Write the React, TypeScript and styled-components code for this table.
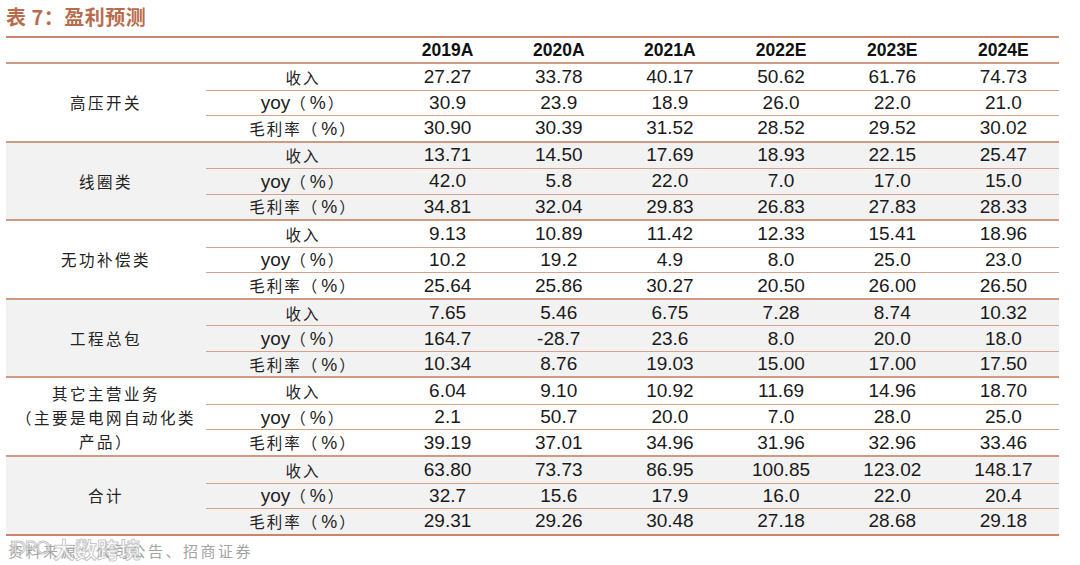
import React from "react";
import styled, { createGlobalStyle } from "styled-components";

const Global = createGlobalStyle`
  html, body { margin: 0; padding: 0; background: #ffffff; }
  body { font-family: "Liberation Sans", Arial, "Noto Sans CJK SC", sans-serif; }
`;

const Page = styled.div`
  width: 1080px;
  height: 565px;
  position: relative;
  overflow: hidden;
  background: #fff;
`;

const Title = styled.div`
  margin: 0 0 0 6px;
  height: 36px;
  display: flex;
  align-items: center;
  font-family: "Noto Sans CJK SC", sans-serif;
  font-weight: 700;
  font-size: 20px;
  color: #b96c4c;
  letter-spacing: 0.5px;
  box-sizing: border-box;
  padding-bottom: 4px;
`;

const Table = styled.div`
  margin-left: 6px;
  width: 1053px;
  border-top: 2px solid #c9866a;
  border-bottom: 2px solid #c9866a;
`;

const HeaderRow = styled.div`
  display: grid;
  grid-template-columns: 386px repeat(6, 1fr);
  height: 24px;
  align-items: center;
`;

const HeadCell = styled.div`
  text-align: center;
  font-family: "Liberation Sans", Arial, sans-serif;
  font-weight: 700;
  font-size: 17.5px;
  color: #111;
`;

const Group = styled.div<{ $shaded: boolean }>`
  display: grid;
  grid-template-columns: 200px 1fr;
  height: 78.6px;
  box-sizing: border-box;
  border-top: 2px solid #d09a82;
  background: ${(p) => (p.$shaded ? "#f2f2f2" : "#ffffff")};
`;

const GroupLabel = styled.div`
  display: flex;
  align-items: center;
  justify-content: center;
  text-align: center;
  font-family: "Noto Sans CJK SC", sans-serif;
  font-size: 15.5px;
  line-height: 24px;
  letter-spacing: 2.5px;
  color: #222;
`;

const Rows = styled.div`
  display: grid;
  grid-template-rows: repeat(3, 1fr);
`;

const Row = styled.div<{ $first: boolean }>`
  display: grid;
  grid-template-columns: 186px repeat(6, 1fr);
  align-items: center;
  box-sizing: border-box;
  border-top: ${(p) => (p.$first ? "none" : "1.5px solid #d6a28b")};
`;

const SubLabel = styled.div`
  text-align: center;
  font-family: "Noto Sans CJK SC", sans-serif;
  font-size: 15.5px;
  letter-spacing: 2px;
  color: #222;
  white-space: nowrap;
  padding-left: 8px;
`;

const Yoy = styled.span`
  font-family: "Liberation Sans", Arial, sans-serif;
  font-size: 19px;
  letter-spacing: 0;
`;

const Pct = styled.span`
  font-family: "Liberation Sans", Arial, sans-serif;
  font-size: 18px;
  letter-spacing: 0;
  margin: 0 2px;
`;

const Num = styled.div`
  text-align: center;
  font-family: "Liberation Sans", Arial, sans-serif;
  font-size: 19px;
  color: #1a1a1a;
`;

const Source = styled.div`
  margin: 4px 0 0 8px;
  font-family: "Noto Sans CJK SC", sans-serif;
  font-size: 15px;
  letter-spacing: 2.5px;
  color: #a3a3a3;
`;

const Watermark = styled.div`
  position: absolute;
  left: 10px;
  top: 532px;
  display: flex;
  align-items: center;
  gap: 4px;
  font-family: "Noto Sans CJK SC", sans-serif;
  font-weight: 700;
  font-size: 22px;
  color: rgba(255, 255, 255, 0.75);
  -webkit-text-stroke: 1px rgba(150, 150, 150, 0.55);
  pointer-events: none;
`;

const Mark = styled.span`
  font-family: "Liberation Sans", Arial, sans-serif;
  font-size: 18px;
  font-weight: 400;
  letter-spacing: -1px;
`;

const years = ["2019A", "2020A", "2021A", "2022E", "2023E", "2024E"];

type GroupData = { label: React.ReactNode; rows: string[][] };

const groups: GroupData[] = [
  {
    label: "高压开关",
    rows: [
      ["27.27", "33.78", "40.17", "50.62", "61.76", "74.73"],
      ["30.9", "23.9", "18.9", "26.0", "22.0", "21.0"],
      ["30.90", "30.39", "31.52", "28.52", "29.52", "30.02"],
    ],
  },
  {
    label: "线圈类",
    rows: [
      ["13.71", "14.50", "17.69", "18.93", "22.15", "25.47"],
      ["42.0", "5.8", "22.0", "7.0", "17.0", "15.0"],
      ["34.81", "32.04", "29.83", "26.83", "27.83", "28.33"],
    ],
  },
  {
    label: "无功补偿类",
    rows: [
      ["9.13", "10.89", "11.42", "12.33", "15.41", "18.96"],
      ["10.2", "19.2", "4.9", "8.0", "25.0", "23.0"],
      ["25.64", "25.86", "30.27", "20.50", "26.00", "26.50"],
    ],
  },
  {
    label: "工程总包",
    rows: [
      ["7.65", "5.46", "6.75", "7.28", "8.74", "10.32"],
      ["164.7", "-28.7", "23.6", "8.0", "20.0", "18.0"],
      ["10.34", "8.76", "19.03", "15.00", "17.00", "17.50"],
    ],
  },
  {
    label: (
      <>
        其它主营业务
        <br />
        （主要是电网自动化类
        <br />
        产品）
      </>
    ),
    rows: [
      ["6.04", "9.10", "10.92", "11.69", "14.96", "18.70"],
      ["2.1", "50.7", "20.0", "7.0", "28.0", "25.0"],
      ["39.19", "37.01", "34.96", "31.96", "32.96", "33.46"],
    ],
  },
  {
    label: "合计",
    rows: [
      ["63.80", "73.73", "86.95", "100.85", "123.02", "148.17"],
      ["32.7", "15.6", "17.9", "16.0", "22.0", "20.4"],
      ["29.31", "29.26", "30.48", "27.18", "28.68", "29.18"],
    ],
  },
];

const subLabels = [
  <>收入</>,
  <>
    <Yoy>yoy</Yoy>（<Pct>%</Pct>）
  </>,
  <>
    毛利率（<Pct>%</Pct>）
  </>,
];

export default function App() {
  return (
    <Page>
      <Global />
      <Title>表 7：盈利预测</Title>
      <Table>
        <HeaderRow>
          <div />
          {years.map((y) => (
            <HeadCell key={y}>{y}</HeadCell>
          ))}
        </HeaderRow>
        {groups.map((g, gi) => (
          <Group key={gi} $shaded={gi % 2 === 1}>
            <GroupLabel>{g.label}</GroupLabel>
            <Rows>
              {g.rows.map((r, ri) => (
                <Row key={ri} $first={ri === 0}>
                  <SubLabel>{subLabels[ri]}</SubLabel>
                  {r.map((v, vi) => (
                    <Num key={vi}>{v}</Num>
                  ))}
                </Row>
              ))}
            </Rows>
          </Group>
        ))}
      </Table>
      <Source>资料来源：公司公告、招商证券</Source>
      <Watermark>
        <Mark>iDPO</Mark>大数跨境
      </Watermark>
    </Page>
  );
}
